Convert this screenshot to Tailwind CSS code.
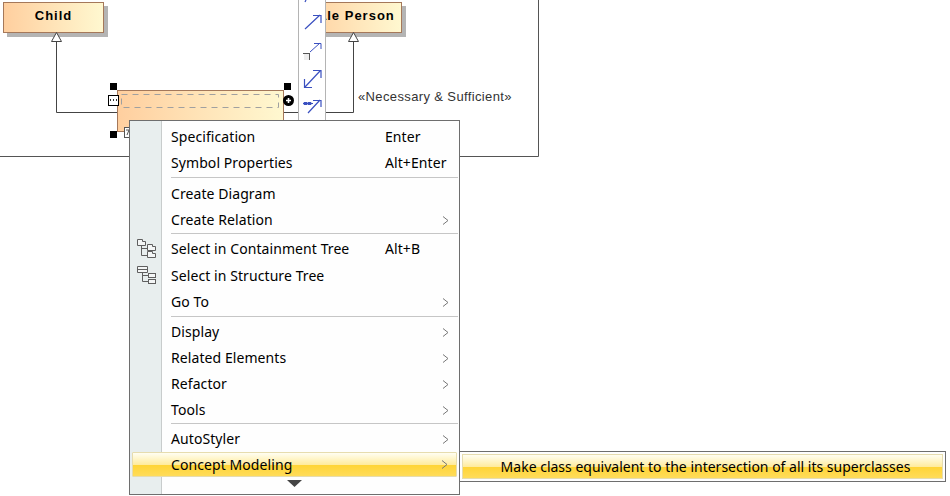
<!DOCTYPE html>
<html lang="en">
<head>
<meta charset="UTF-8">
<title>Concept Modeling menu</title>
<script src="https://cdn.jsdelivr.net/npm/@tailwindcss/browser@4"></script>
</head>
<body class="bg-white overflow-hidden">
<div class="relative w-[950px] h-[496px] overflow-hidden bg-white font-['Noto_Sans',sans-serif]">

  <!-- diagram frame -->
  <svg class="absolute left-0 top-0" width="950" height="496" fill="none">
    <path d="M0 156.5H538.5V0" stroke="#555"/>
  </svg>

  <!-- class boxes -->
  <div class="absolute left-[3px] top-[2px] w-[101px] h-[31px] pb-[3px] flex items-center justify-center border border-[#a5785a] bg-linear-to-r from-[#ffcf9f] to-[#fff8d0] shadow-[4px_4px_0_#b4b4b4] font-['Liberation_Sans',sans-serif] font-bold text-[13px] tracking-[1px] text-black">Child</div>
  <div class="absolute left-[300px] top-[2px] w-[102px] h-[31px] pb-[3px] flex items-center justify-center border border-[#a5785a] bg-linear-to-r from-[#ffcf9f] to-[#fff8d0] shadow-[4px_4px_0_#b4b4b4] font-['Liberation_Sans',sans-serif] font-bold text-[13px] tracking-[1px] text-black">Male Person</div>

  <!-- generalizations, over the box shadows -->
  <svg class="absolute left-0 top-0" width="950" height="496" fill="none">
    <path d="M56.5 41V112.5H118" stroke="#444"/>
    <path d="M284 112.5H353.5V41" stroke="#444"/>
    <path d="M56.5 32.5L51.5 41.5H61.5Z" fill="#fff" stroke="#444"/>
    <path d="M353.5 32.5L348.5 41.5H358.5Z" fill="#fff" stroke="#444"/>
  </svg>

  <!-- selected class -->
  <div class="absolute left-[117px] top-[90px] w-[167px] h-[42px] border border-[#a5785a] bg-linear-to-r from-[#ffcf9f] to-[#fff8d0] p-[3px]">
    <svg class="block" width="158" height="14" fill="none"><rect x=".5" y=".5" width="157" height="13" stroke="#a0a0a0" stroke-dasharray="6 5"/></svg>
  </div>
  <div class="absolute left-[110px] top-[83px] w-[7px] h-[7px] bg-black"></div>
  <div class="absolute left-[284px] top-[83px] w-[7px] h-[7px] bg-black"></div>
  <div class="absolute left-[110px] top-[131px] w-[7px] h-[7px] bg-black"></div>
  <div class="absolute left-[108px] top-[95px] w-[11px] h-[11px] flex items-center justify-center border border-black bg-white">
    <svg width="7" height="3"><path d="M0 1h1M3 1h1M6 1h1" stroke="#333" stroke-width="2"/></svg>
  </div>
  <div class="absolute left-[283px] top-[95px] w-[11px] h-[11px] rounded-full bg-black">
    <svg width="11" height="11"><path d="M5.5 3V8M3 5.5H8" stroke="#fff" stroke-width="1.6"/></svg>
  </div>
  <div class="absolute left-[124px] top-[127px] w-[8px] h-[11px] border border-[#555] bg-white">
    <svg width="6" height="9" fill="none"><path d="M1 2H4L2 7" stroke="#555"/></svg>
  </div>

  <div class="absolute left-[358px] top-[89px] font-['Liberation_Sans',sans-serif] text-[13px] leading-4 tracking-[0.37px] text-[#333]">«Necessary &amp; Sufficient»</div>

  <!-- smart manipulator toolbar -->
  <div class="absolute left-[298px] top-0 w-[28px] h-[121px] border-x border-[#b4b4b4] bg-white">
    <svg width="26" height="121" fill="none" stroke="#3a50c0" stroke-width="1.2">
      <path d="M7 0L6 2"/>
      <path d="M6 29L21 15M14 15.5H22V23"/>
      <rect x="5" y="54" width="5" height="6" fill="#eee" stroke="none"/>
      <path d="M4 53.5H11M10.5 53V60" stroke="#555" stroke-width="1"/>
      <path d="M11 52L21 43M15 43.5H22V49" stroke-width="1"/>
      <path d="M6 87L21 71M14 70.5H22V78M5.5 79V87.5H13"/>
      <path d="M4 103.5H14M5 102.5H8V104.5H5ZM9 102.5H12V104.5H9Z" stroke-width="1"/>
      <path d="M9 113L21 100M14 100.5H22V107"/>
    </svg>
  </div>

  <!-- context menu -->
  <div class="absolute left-[129px] top-[120px] w-[331px] h-[375px] border border-[#6e6e6e] bg-[#fefefe] text-[14px] leading-[26px] tracking-[0.08px] text-black">
    <div class="absolute left-0 top-0 bottom-0 w-[32px] border-r border-[#c8cccc] bg-[#e8eeee]"></div>

    <div class="relative pt-[3px]">
      <div class="flex h-[26px]"><span class="ml-[41px] w-[214px]">Specification</span><span>Enter</span></div>
      <div class="flex h-[26px]"><span class="ml-[41px] w-[214px]">Symbol Properties</span><span>Alt+Enter</span></div>
      <div class="ml-[41px] mr-px mt-px mb-[3px] h-px bg-[#c6c6c6]"></div>

      <div class="flex h-[26px]"><span class="ml-[41px]">Create Diagram</span></div>
      <div class="flex h-[26px] items-center justify-between pr-[10px]"><span class="ml-[41px]">Create Relation</span>
        <svg width="7" height="9" fill="none" stroke="#777"><path d="M1 .5L6 4.5L1 8.5"/></svg></div>
      <div class="ml-[41px] mr-px mb-[2px] h-px bg-[#c6c6c6]"></div>

      <div class="relative flex h-[26px]"><span class="ml-[41px] w-[214px]">Select in Containment Tree</span><span>Alt+B</span>
        <svg class="absolute left-[7px] top-[3px]" width="19" height="19" fill="#f4f6f6" stroke="#5f5f5f">
          <path d="M.5 .5H5.5V2.5H8.5V6.5H.5Z"/><path d="M4.5 7V16.5H10M4.5 9.5H10" fill="none"/>
          <path d="M10.5 5.5H15.5V7.5H18.5V11.5H10.5Z"/><path d="M10.5 12.5H15.5V14.5H18.5V18.5H10.5Z"/>
        </svg></div>
      <div class="relative flex h-[26px] mt-px"><span class="ml-[41px]">Select in Structure Tree</span>
        <svg class="absolute left-[7px] top-[3px]" width="19" height="18" fill="#f4f6f6" stroke="#5f5f5f">
          <path d="M.5 .5H10.5V6.5H.5ZM.5 3.5H10.5"/><path d="M5.5 7V15.5H11M5.5 9.5H11" fill="none"/>
          <rect x="11.5" y="7.5" width="7" height="4"/><rect x="11.5" y="13.5" width="7" height="4"/>
        </svg></div>
      <div class="flex h-[26px] items-center justify-between pr-[10px]"><span class="ml-[41px]">Go To</span>
        <svg width="7" height="9" fill="none" stroke="#777"><path d="M1 .5L6 4.5L1 8.5"/></svg></div>
      <div class="ml-[41px] mr-px mt-px mb-[2px] h-px bg-[#c6c6c6]"></div>

      <div class="flex h-[26px] items-center justify-between pr-[10px]"><span class="ml-[41px]">Display</span>
        <svg width="7" height="9" fill="none" stroke="#777"><path d="M1 .5L6 4.5L1 8.5"/></svg></div>
      <div class="flex h-[26px] items-center justify-between pr-[10px]"><span class="ml-[41px]">Related Elements</span>
        <svg width="7" height="9" fill="none" stroke="#777"><path d="M1 .5L6 4.5L1 8.5"/></svg></div>
      <div class="flex h-[26px] items-center justify-between pr-[10px]"><span class="ml-[41px]">Refactor</span>
        <svg width="7" height="9" fill="none" stroke="#777"><path d="M1 .5L6 4.5L1 8.5"/></svg></div>
      <div class="flex h-[26px] items-center justify-between pr-[10px]"><span class="ml-[41px]">Tools</span>
        <svg width="7" height="9" fill="none" stroke="#777"><path d="M1 .5L6 4.5L1 8.5"/></svg></div>
      <div class="ml-[41px] mr-px mb-[2px] h-px bg-[#c6c6c6]"></div>

      <div class="flex h-[26px] items-center justify-between pr-[10px]"><span class="ml-[41px]">AutoStyler</span>
        <svg width="7" height="9" fill="none" stroke="#777"><path d="M1 .5L6 4.5L1 8.5"/></svg></div>
      <div class="flex h-[25px] ml-[2px] mr-[2px] items-center justify-between pr-[8px] border border-[#e6dcae] rounded-[1px] bg-[linear-gradient(#fffef2_0%,#ffeb9c_52%,#ffd436_52%,#ffdc5a_100%)]"><span class="ml-[38px]">Concept Modeling</span>
        <svg width="7" height="9" fill="none" stroke="#777"><path d="M1 .5L6 4.5L1 8.5"/></svg></div>
      <div class="flex justify-center mt-[3px]">
        <svg width="15" height="7"><path d="M0 0H15L7.5 7Z" fill="#444"/></svg>
      </div>
    </div>
  </div>

  <!-- submenu -->
  <div class="absolute left-[459px] top-[451px] w-[487px] h-[31px] border border-[#6e6e6e] bg-[#fefefe] p-[2px] text-[14px] text-black">
    <div class="flex h-full items-center justify-center pl-[6px] border border-[#e6dcae] bg-[linear-gradient(#fffef2_0%,#ffeb9c_52%,#ffd436_52%,#ffdc5a_100%)]"><span>Make class equivalent to the intersection of all its superclasses</span></div>
  </div>
</div>
</body>
</html>
